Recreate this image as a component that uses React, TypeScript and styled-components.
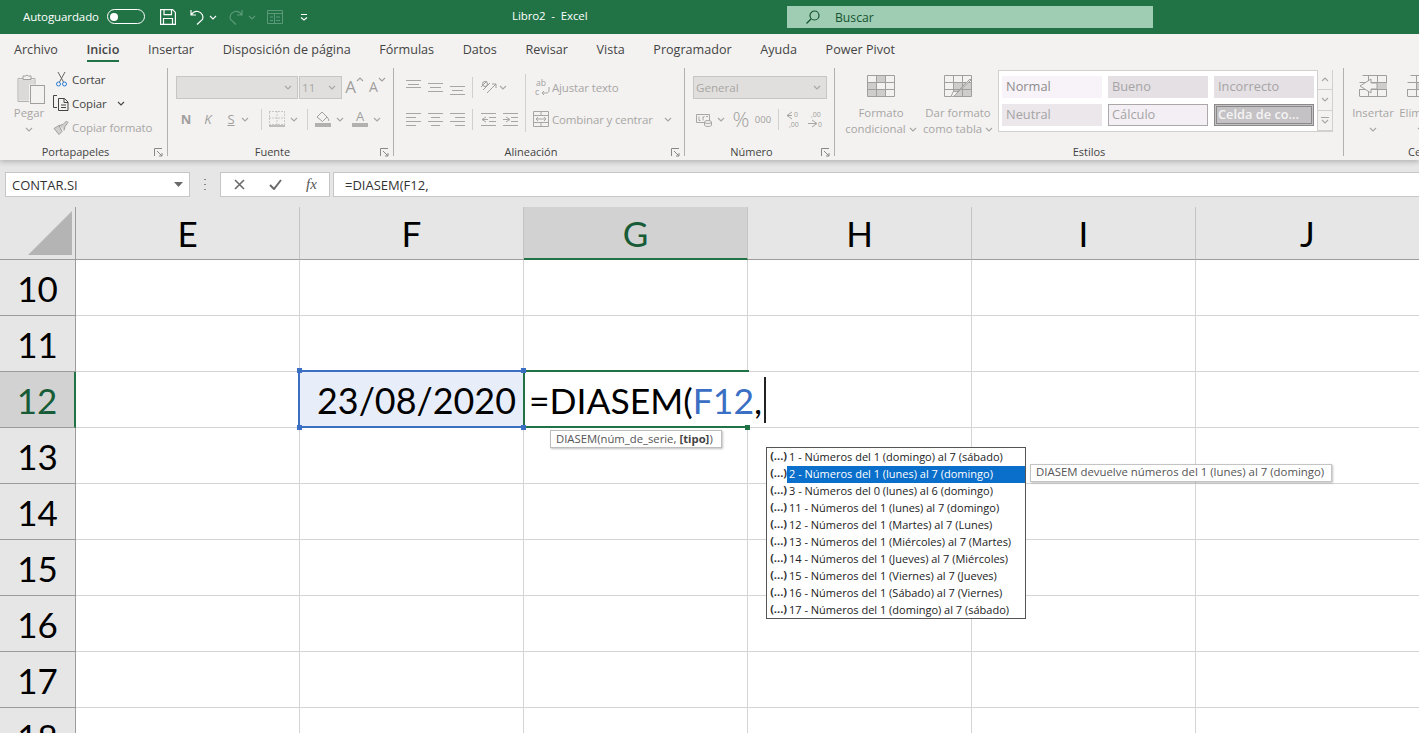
import React from "react";
import styled, { createGlobalStyle } from "styled-components";

const UI = `"Open Sans", "Noto Sans", sans-serif`;
const SHEET = `Lato, "Open Sans", sans-serif`;
const DIM = "#a8a6a4";
const LINE = "#b3b0ad";

const Global = createGlobalStyle`
  html, body { margin: 0; padding: 0; background: #fff; }
  body { font-family: ${UI}; overflow: hidden; }
  * { box-sizing: border-box; }
`;

const Page = styled.div`
  width: 1419px; height: 733px; overflow: hidden; display: flex; flex-direction: column; position: relative;
`;

/* ---------- title bar ---------- */
const TitleBar = styled.header`
  height: 34px; flex: none; background: #217346; color: #fff; display: flex; align-items: center; font-size: 11.5px;
`;
const AutoSave = styled.span`margin-left: 23px; margin-top: -1px; width: 77px; white-space: nowrap; letter-spacing: -0.1px;`;
const Toggle = styled.span`
  margin-left: 7px; width: 38px; height: 15px; margin-top: -1px; border: 1.5px solid #fff; border-radius: 8px; display: flex; align-items: center; padding-left: 2px;
  &::before { content: ""; width: 8px; height: 8px; border-radius: 50%; background: #fff; }
`;
const QuickIcon = styled.span<{ $w: number; $ml: number; $dim?: boolean }>`
  display: inline-flex; align-items: center; justify-content: center; width: ${p => p.$w}px; margin-left: ${p => p.$ml}px;
  color: ${p => (p.$dim ? "#5b9a78" : "#fff")};
`;
const DocTitle = styled.span`margin-left: ${512 - 308}px; margin-top: -3px; width: 275px; white-space: pre; letter-spacing: -0.1px;`;
const SearchBox = styled.div`
  width: 366px; height: 22px; background: #9fcdb3; color: #14532f; display: flex; align-items: center; padding-left: 19px; gap: 15px; font-size: 12.2px;
`;

/* ---------- tabs ---------- */
const TabBar = styled.nav`
  height: 30px; flex: none; background: #f3f2f1; display: flex; gap: 28.6px; padding-left: 14px;
`;
const Tab = styled.span<{ $active?: boolean }>`
  height: 30px; display: flex; align-items: center; font-size: 12.6px; color: #444; white-space: nowrap; position: relative;
  font-weight: ${p => (p.$active ? 600 : 400)};
  &::after { content: ""; position: absolute; left: 0; right: 0; bottom: 2px; height: 2px; background: ${p => (p.$active ? "#217346" : "transparent")}; }
`;

/* ---------- ribbon ---------- */
const Ribbon = styled.section`
  height: 96px; flex: none; background: #f3f2f1; display: flex; position: relative; z-index: 2; overflow: hidden;
  box-shadow: 0 2px 5px rgba(0,0,0,.22); clip-path: inset(0 0 -10px 0);
`;
const Group = styled.div<{ $w: number }>`
  width: ${p => p.$w}px; flex: none; height: 96px; display: flex; flex-direction: column; position: relative;
`;
const GroupDivider = styled.i`width: 1px; height: 88px; margin-top: 4px; background: ${LINE}; flex: none;`;
const GroupBody = styled.div`height: 80px; display: flex; flex: none;`;
const GroupLabel = styled.div<{ $launcher?: boolean }>`
  height: 16px; font-size: 11px; line-height: 16px; color: #444; text-align: center; padding-right: ${p => (p.$launcher ? 16 : 0)}px;
`;
const Launcher = styled.span`position: absolute; right: 4px; bottom: 3px; color: #8a8886; display: flex;`;
const BigButton = styled.div<{ $w: number; $ml?: number; $top?: number }>`
  width: ${p => p.$w}px; margin-left: ${p => p.$ml ?? 0}px; padding-top: ${p => p.$top ?? 11}px; flex: none;
  display: flex; flex-direction: column; align-items: center; color: ${DIM}; font-size: 11.4px; line-height: 16px; white-space: nowrap;
`;
const BigIcon = styled.span<{ $h: number; $shift?: number }>`height: ${p => p.$h}px; display: flex; margin-bottom: 1px; margin-left: ${p => p.$shift ?? 0}px;`;
const BigText = styled.span<{ $mt?: number }>`margin-top: ${p => p.$mt ?? 7}px; display: flex; align-items: center; gap: 3px;`;
const BigLine = styled.span`display: flex; align-items: center; gap: 3px; height: 16px;`;
const ChevLine = styled.span`height: 16px; display: flex; align-items: center;`;

const ClipColumn = styled.div`padding-top: 3px; margin-left: 3px; width: 114px;`;
const ClipRow = styled.div<{ $dim?: boolean }>`
  height: 24.3px; display: flex; align-items: center; font-size: 11.5px; white-space: nowrap; letter-spacing: -0.1px; color: ${p => (p.$dim ? DIM : "#444")};
`;
const ClipIcon = styled.span`width: 16px; display: flex; justify-content: center; flex: none; margin-right: 3px;`;
const ClipChev = styled.span`margin-left: 10px; display: flex; color: #444;`;

const ToolStack = styled.div<{ $w?: number }>`
  padding-top: 11px; display: flex; flex-direction: column; gap: 8px; flex: none; ${p => (p.$w ? `width: ${p.$w}px;` : "")}
`;
const ToolRow = styled.div`height: 24px; display: flex; align-items: center; color: ${DIM};`;
const Tool = styled.span<{ $w: number; $ml?: number }>`
  width: ${p => p.$w}px; margin-left: ${p => p.$ml ?? 0}px; flex: none; display: inline-flex; align-items: center; justify-content: center;
`;
const ToolSep = styled.i<{ $ml: number }>`width: 1px; height: 21px; flex: none; background: #d2d0ce; margin-left: ${p => p.$ml}px;`;
const TallSep = styled.i`width: 1px; height: 58px; margin-top: 10px; flex: none; background: #d2d0ce;`;
const ToolText = styled.span<{ $ml: number; $w?: number }>`
  margin-left: ${p => p.$ml}px; font-size: 11.5px; white-space: nowrap; color: ${DIM}; letter-spacing: -0.15px; ${p => (p.$w ? `width:${p.$w}px;` : "")}
`;
const Combo = styled.div<{ $w: number; $ml: number }>`
  width: ${p => p.$w}px; height: 23px; margin-left: ${p => p.$ml}px; flex: none; background: #e1dfdd; border: 1px solid #c8c6c4; color: ${DIM};
  display: flex; align-items: center; justify-content: space-between; padding: 0 5px 0 2px; font-size: 11.6px;
`;
const Bold = styled.span`font-weight: 700; font-size: 13px; color: #a19f9d;`;
const Ital = styled.span`font-style: italic; font-size: 13px; color: #a19f9d;`;
const Under = styled.span`text-decoration: underline; font-size: 13px; color: #a19f9d;`;
const GrowA = styled.span<{ $size: number }>`font-size: ${p => p.$size}px; line-height: 20px; color: #a19f9d; display: inline-flex; align-items: flex-start; gap: 0;`;
const ColorA = styled.span`
  width: 16px; height: 16px; display: flex; justify-content: center; align-items: flex-end; font-size: 13px; line-height: 13px; color: #a19f9d; border-bottom: 4px solid #b3b0ad;
`;
const Percent = styled.span`font-size: 21px; font-weight: 300; line-height: 20px; color: #a19f9d;`;
const Thousand = styled.span`font-size: 9.5px; color: #a19f9d;`;

const Gallery = styled.div`
  width: 335px; height: 62px; margin: 6px 0 0 1px; background: #fff; border: 1px solid #d2d0ce; display: flex; flex: none; padding: 5px 0 0 3px;
`;
const StyleGrid = styled.div`display: grid; grid-template-columns: repeat(3, 100px); grid-template-rows: 22px 22px; gap: 6px; width: 316px;`;
type Chip = "normal" | "bad" | "neutral" | "calc" | "check";
const StyleChip = styled.span<{ $kind: Chip }>`
  display: flex; align-items: center; font-size: 12.8px; white-space: nowrap; overflow: hidden; padding-bottom: 2px;
  padding-left: ${p => (p.$kind === "check" ? 1 : p.$kind === "calc" ? 3 : 4)}px;
  background: ${p => ({ normal: "#f7f3f8", bad: "#e4e0e4", neutral: "#ebe7eb", calc: "#f3eff4", check: "#c4c2c5" } as Record<Chip, string>)[p.$kind]};
  color: ${p => (p.$kind === "check" ? "#f4f4f4" : p.$kind === "normal" ? "#8e8c8c" : "#a6a4a5")};
  font-weight: ${p => (p.$kind === "check" ? 600 : 400)};
  border: ${p => (p.$kind === "calc" ? "1px solid #aaa8a8" : p.$kind === "check" ? "3px double #8a8888" : "none")};
`;
const GalleryScroll = styled.div`width: 15px; margin-top: -6px; height: 61px; display: flex; flex-direction: column; border-left: 1px solid #d2d0ce; background: #f3f2f1;`;
const ScrollBtn = styled.span`
  flex: 1; display: flex; align-items: center; justify-content: center; color: ${DIM}; border-bottom: 1px solid #d2d0ce;
`;

/* ---------- formula bar ---------- */
const FormulaArea = styled.div`
  height: 47px; flex: none; background: #e6e6e6; padding-top: 12px; display: flex; align-items: flex-start;
`;
const NameBox = styled.div`
  margin-left: 5px; width: 185px; height: 25px; background: #fff; border: 1px solid #c6c6c6; display: flex; align-items: center; justify-content: space-between;
  padding: 0 6px; font-size: 13px; color: #333;
`;
const Grip = styled.span`
  width: 2px; height: 14px; margin: 5px 14px 0 14px; background-image: radial-gradient(circle, #8a8886 1px, transparent 1px); background-size: 2px 5px;
`;
const FxBox = styled.div`
  width: 110px; height: 25px; background: #fff; border: 1px solid #c6c6c6; display: flex; align-items: center; padding-left: 13px; gap: 24px; color: #6a6a6a;
`;
const FxMark = styled.span`font-family: "Liberation Serif", serif; font-style: italic; font-weight: 400; font-size: 15px; color: #555; margin-left: 0;`;
const FormulaInput = styled.div`
  margin-left: 3px; flex: 1; height: 25px; background: #fff; border: 1px solid #c6c6c6; border-right: none; display: flex; align-items: center; padding-left: 11px;
  font-size: 13px; color: #333;
`;

/* ---------- sheet ---------- */
const Sheet = styled.div`
  flex: 1; position: relative; overflow: hidden; display: grid; grid-template-columns: 76px repeat(6, 224px); grid-auto-rows: 56px; grid-template-rows: 53px;
  font-family: ${SHEET}; background: #fff;
`;
const Corner = styled.div`
  background: #e6e6e6; border-right: 1px solid #9c9c9c; border-bottom: 1px solid #9c9c9c; position: relative;
  &::after {
    content: ""; position: absolute; right: 3px; bottom: 4px; width: 44px; height: 44px; background: #b4b4b4; clip-path: polygon(100% 0, 100% 100%, 0 100%);
  }
`;
const ColHead = styled.div<{ $active?: boolean }>`
  display: flex; align-items: center; justify-content: center; font-size: 35px; padding-top: 0;
  background: ${p => (p.$active ? "#d2d2d2" : "#e6e6e6")}; color: ${p => (p.$active ? "#185c37" : "#000")};
  border-right: 1px solid #c4c4c4; border-bottom: ${p => (p.$active ? "2px solid #217346" : "1px solid #9c9c9c")};
`;
const RowHead = styled.div<{ $active?: boolean }>`
  display: flex; align-items: center; justify-content: center; font-size: 35px;
  background: ${p => (p.$active ? "#d2d2d2" : "#e6e6e6")}; color: ${p => (p.$active ? "#185c37" : "#000")};
  border-right: ${p => (p.$active ? "2px solid #217346" : "1px solid #9c9c9c")}; border-bottom: 1px solid #9c9c9c;
`;
const Cell = styled.div`border-right: 1px solid #d4d4d4; border-bottom: 1px solid #d4d4d4; position: relative;`;
const RefCell = styled.div`
  position: relative; background: #e8eef9; display: flex; align-items: center; justify-content: flex-end; padding-right: 8px; font-size: 35.9px; color: #000; z-index: 3;
`;
const RefFrame = styled.span`position: absolute; left: -2px; top: -2px; right: -1px; bottom: 0; border: 2px solid #3a6fc4; border-right-color: #217346;`;
const Handle = styled.span<{ $x: "l" | "r"; $y: "t" | "b"; $c: string }>`
  position: absolute; width: 5px; height: 5px; background: ${p => p.$c};
  ${p => (p.$x === "l" ? "left: -3px;" : "right: -2px;")} ${p => (p.$y === "t" ? "top: -4px;" : "bottom: -2px;")}
`;
const EditCell = styled.div`
  position: relative; display: flex; align-items: center; padding-left: 5px; font-size: 35.5px; color: #000; white-space: nowrap; background: #fff; z-index: 2;
  &::before { content: ""; position: absolute; left: -1px; right: -1px; top: -2px; bottom: 0; border: 2px solid #217346; border-right: none; pointer-events: none; }
`;
const RefText = styled.span`color: #3a6fc4;`;
const Caret = styled.span`flex: none; display: block; width: 2px; height: 46px; background: #222; margin-left: 2px;`;

const ArgTip = styled.div`
  position: absolute; left: 550px; top: 223px; width: 172px; height: 18px; z-index: 5; background: #fff; border: 1px solid #bdbdbd; box-shadow: 1px 1px 2px rgba(0,0,0,.25);
  font-family: ${UI}; font-size: 11.3px; color: #555; display: flex; align-items: center; padding: 0 0 2px 5px; white-space: nowrap;
  b { color: #444; margin-left: 3px; }
`;
const Menu = styled.ul`
  position: absolute; left: 766px; top: 240px; width: 260px; height: 172px; z-index: 5; margin: 0; padding: 1px 0 0; list-style: none; background: #fff; border: 1px solid #555;
  font-family: ${UI}; font-size: 11px; color: #222;
`;
const MenuItem = styled.li`height: 17px; display: flex; align-items: center; white-space: nowrap;`;
const MenuMark = styled.span`width: 20px; flex: none; text-align: right; font-weight: 700; font-size: 11px; letter-spacing: 0; color: #333; margin-top: -5px;`;
const MenuText = styled.span<{ $on?: boolean }>`
  flex: 1; height: 17px; line-height: 15px; padding-left: 2px;
  background: ${p => (p.$on ? "#0a6ecb" : "transparent")}; color: ${p => (p.$on ? "#fff" : "#222")};
`;
const SideTip = styled.div`
  position: absolute; left: 1030px; top: 257px; width: 302px; height: 18px; z-index: 5; background: #fff; border: 1px solid #c4c4c4; box-shadow: 1px 1px 2px rgba(0,0,0,.25);
  font-family: ${UI}; font-size: 11.4px; color: #555; display: flex; align-items: center; padding: 0 0 3px 5px; white-space: nowrap;
`;

/* ---------- drawings ---------- */
const Svg: React.FC<{ w: number; h: number; children: React.ReactNode; sw?: number }> = ({ w, h, children, sw = 1 }) => (
  <svg width={w} height={h} viewBox={`0 0 ${w} ${h}`} fill="none" stroke="currentColor" strokeWidth={sw} style={{ display: "block" }}>
    {children}
  </svg>
);
const Chev = () => (
  <Svg w={8} h={5} sw={1.1}><path d="M1 1l3 3 3-3" /></Svg>
);
const Up = () => (
  <Svg w={8} h={5} sw={1.1}><path d="M1 4l3-3 3 3" /></Svg>
);
const Lines: React.FC<{ ys: number[]; xs: [number, number][] }> = ({ ys, xs }) => (
  <Svg w={15} h={17}>
    {ys.map((y, i) => <path key={i} d={`M${xs[i % xs.length][0]} ${y}H${xs[i % xs.length][1]}`} />)}
  </Svg>
);
const AW: [number, number] = [0, 15];
const GridPic: React.FC<{ fills: [number, number, number, number][]; brush?: boolean }> = ({ fills, brush }) => (
  <Svg w={28} h={22}>
    {fills.map((f, i) => <rect key={i} x={f[0]} y={f[1]} width={f[2]} height={f[3]} fill="#cfcdcb" stroke="none" />)}
    <path d="M.5.5h27v21H.5zM.5 7.5h27M.5 14.5h27M9.5.5v21M18.5.5v21" stroke="#a19f9d" />
    {brush && <path d="M27 5L14 17l-2 2c-1 2-3 3-6 3 2-1 2-3 3-5 1-1 3-1 4 0L26 4z" fill="#f3f2f1" stroke="#a19f9d" />}
  </Svg>
);
const CellsPic: React.FC<{ arrow?: boolean }> = ({ arrow }) => (
  <Svg w={28} h={22}>
    <path d="M3.5.5h24M.5 21.5h27M.5 14.5h27M.5 7.5h27M9.5.5v21M18.5.5v21M27.5.5v21M.5 14v7" stroke="#a19f9d" />
    <rect x={10} y={8} width={18} height={6} fill="#cfcdcb" stroke="none" />
    {arrow && <path d="M12 4L1 11l11 7v-4h6V8h-6z" fill="#f3f2f1" stroke="#a19f9d" />}
  </Svg>
);

const rows = [10, 11, 12, 13, 14, 15, 16, 17, 18];
const cols = ["E", "F", "G", "H", "I", "J"];
const items = [
  "1 - Números del 1 (domingo) al 7 (sábado)",
  "2 - Números del 1 (lunes) al 7 (domingo)",
  "3 - Números del 0 (lunes) al 6 (domingo)",
  "11 - Números del 1 (lunes) al 7 (domingo)",
  "12 - Números del 1 (Martes) al 7 (Lunes)",
  "13 - Números del 1 (Miércoles) al 7 (Martes)",
  "14 - Números del 1 (Jueves) al 7 (Miércoles)",
  "15 - Números del 1 (Viernes) al 7 (Jueves)",
  "16 - Números del 1 (Sábado) al 7 (Viernes)",
  "17 - Números del 1 (domingo) al 7 (sábado)",
];
const tabs = ["Archivo", "Inicio", "Insertar", "Disposición de página", "Fórmulas", "Datos", "Revisar", "Vista", "Programador", "Ayuda", "Power Pivot"];

const LauncherIcon = () => (
  <Launcher><Svg w={9} h={9}><path d="M.5 8V.5H8M3 3l5 5M8 5v3H5" /></Svg></Launcher>
);

export default function App() {
  return (
    <Page>
      <Global />
      <TitleBar>
        <AutoSave>Autoguardado</AutoSave>
        <Toggle />
        <QuickIcon $w={16} $ml={15}>
          <Svg w={16} h={16} sw={1.2}><path d="M.6.6h12l2.8 2.8v12H.6zM4 .6v5h7.500v-5M3.500 15.400V9.500h9v5.900" /></Svg>
        </QuickIcon>
        <QuickIcon $w={15} $ml={14}>
          <Svg w={15} h={16} sw={1.2}><path d="M1 1v5h5M1.200 6C3 3 5.500 2 8 2.500c4 1 6 5 4.500 8L7 15.500" /></Svg>
        </QuickIcon>
        <QuickIcon $w={8} $ml={4}><Chev /></QuickIcon>
        <QuickIcon $w={15} $ml={11} $dim>
          <Svg w={15} h={16} sw={1.2}><path d="M14 1v5H9M13.800 6C12 3 9.500 2 7 2.500c-4 1-6 5-4.500 8l5.500 5" /></Svg>
        </QuickIcon>
        <QuickIcon $w={8} $ml={5} $dim><Chev /></QuickIcon>
        <QuickIcon $w={16} $ml={11} $dim>
          <Svg w={16} h={14}><path d="M.5.500h15v13H.5zM.5 3.500h15M3 7h3M3 10.500h3M9 7h4M9 10.500h4M7.500 3.500v10" /></Svg>
        </QuickIcon>
        <QuickIcon $w={8} $ml={17}>
          <Svg w={8} h={8} sw={1.2}><path d="M1 1.500h6M1 4.500l3 2.500 3-2.500" /></Svg>
        </QuickIcon>
        <DocTitle>Libro2  -  Excel</DocTitle>
        <SearchBox>
          <Svg w={14} h={14} sw={1.2}><circle cx={8.500} cy={5.500} r={4.500} /><path d="M5 9l-4.500 4.500" /></Svg>
          Buscar
        </SearchBox>
      </TitleBar>

      <TabBar>
        {tabs.map(t => <Tab key={t} $active={t === "Inicio"}>{t}</Tab>)}
      </TabBar>

      <Ribbon>
        <Group $w={167}>
          <GroupBody>
            <BigButton $w={42} $ml={8} $top={8}>
              <BigIcon $h={32} $shift={4}>
                <Svg w={28} h={32}>
                  <path d="M1 6.500h6M13 6.500h5v6M1 6.500v23h11" stroke="#b3b0ad" />
                  <path d="M2 7.500h15v5h-5v16H2z" fill="#dcdad8" stroke="none" />
                  <path d="M6 7V4h2.500a2 2 0 013 0H14v3.500H6z" fill="#f3f2f1" stroke="#a19f9d" />
                  <rect x={13.500} y={13.500} width={14} height={18} fill="#f3f2f1" stroke="#a19f9d" />
                </Svg>
              </BigIcon>
              <BigLine>Pegar</BigLine>
              <ChevLine><Chev /></ChevLine>
            </BigButton>
            <ClipColumn>
              <ClipRow>
                <ClipIcon>
                  <Svg w={11} h={16}>
                    <path d="M2 1l5.500 10M9 1L3.500 11" stroke="#666" />
                    <circle cx={2.500} cy={13} r={2} stroke="#2b7cd3" /><circle cx={8.500} cy={13} r={2} stroke="#2b7cd3" />
                  </Svg>
                </ClipIcon>
                Cortar
              </ClipRow>
              <ClipRow>
                <ClipIcon>
                  <Svg w={16} h={16} sw={1}>
                    <path d="M4 .500H.500v12H4M5.500 3.500h6l3.500 3.500v8.500h-9.500zM11 3.500v4h4M8 10h5M8 12.500h5" stroke="#444" />
                  </Svg>
                </ClipIcon>
                Copiar
                <ClipChev><Chev /></ClipChev>
              </ClipRow>
              <ClipRow $dim>
                <ClipIcon>
                  <Svg w={16} h={16}>
                    <path d="M1 8.500l5 6 3-3-3-6zM6 5.500l4-1 3.500-3.500 1.500 1.500-3 4-1 4" fill="#d2d0ce" stroke="#a19f9d" />
                  </Svg>
                </ClipIcon>
                Copiar formato
              </ClipRow>
            </ClipColumn>
          </GroupBody>
          <GroupLabel $launcher>Portapapeles</GroupLabel>
          <LauncherIcon />
        </Group>
        <GroupDivider />

        <Group $w={225}>
          <GroupBody>
            <ToolStack>
              <ToolRow>
                <Combo $w={122} $ml={8}><span /><Chev /></Combo>
                <Combo $w={43} $ml={1}>11<Chev /></Combo>
                <Tool $w={17} $ml={4}><GrowA $size={17}>A<Up /></GrowA></Tool>
                <Tool $w={17} $ml={6}><GrowA $size={14}>A<Chev /></GrowA></Tool>
              </ToolRow>
              <ToolRow>
                <Tool $w={16} $ml={10}><Bold>N</Bold></Tool>
                <Tool $w={16} $ml={6}><Ital>K</Ital></Tool>
                <Tool $w={16} $ml={7}><Under>S</Under></Tool>
                <Tool $w={8} $ml={2}><Chev /></Tool>
                <ToolSep $ml={12} />
                <Tool $w={16} $ml={7}>
                  <Svg w={16} h={16}>
                    <path d="M.5.500h15v13H.5zM8 .500v13M.5 7h15" strokeDasharray="1 2" stroke="#a19f9d" />
                    <path d="M0 15h16" stroke="#8a8886" />
                  </Svg>
                </Tool>
                <Tool $w={8} $ml={5}><Chev /></Tool>
                <ToolSep $ml={9} />
                <Tool $w={16} $ml={7}>
                  <Svg w={16} h={16}>
                    <path d="M2 6l5-5 5 5-4.500 4.500z" stroke="#a19f9d" /><path d="M12 6c1.500 1.500 2 3 1.500 4" stroke="#a19f9d" />
                    <rect x={0} y={12} width={16} height={4} fill="#b3b0ad" stroke="none" />
                  </Svg>
                </Tool>
                <Tool $w={8} $ml={5}><Chev /></Tool>
                <Tool $w={16} $ml={8}><ColorA>A</ColorA></Tool>
                <Tool $w={8} $ml={5}><Chev /></Tool>
              </ToolRow>
            </ToolStack>
          </GroupBody>
          <GroupLabel $launcher>Fuente</GroupLabel>
          <LauncherIcon />
        </Group>
        <GroupDivider />

        <Group $w={290}>
          <GroupBody>
            <ToolStack $w={131}>
              <ToolRow>
                <Tool $w={15} $ml={12}><Lines ys={[1.5, 5.5, 8.5]} xs={[AW, [2, 13], AW]} /></Tool>
                <Tool $w={15} $ml={7}><Lines ys={[4.5, 8.5, 12.5]} xs={[AW, [2, 13], AW]} /></Tool>
                <Tool $w={15} $ml={7}><Lines ys={[7.5, 11.5, 15.5]} xs={[AW, [2, 13], AW]} /></Tool>
                <ToolSep $ml={7} />
                <Tool $w={18} $ml={7}>
                  <Svg w={18} h={16}>
                    <path d="M1 8l6-6M3 11l7-7M7 14L16 5M16 5h-4M16 5v4" stroke="#a19f9d" />
                    <circle cx={5} cy={5} r={2.500} stroke="#a19f9d" />
                  </Svg>
                </Tool>
                <Tool $w={8} $ml={1}><Chev /></Tool>
              </ToolRow>
              <ToolRow>
                <Tool $w={15} $ml={12}><Lines ys={[2.5, 6.5, 10.5, 14.5]} xs={[AW, [0, 10]]} /></Tool>
                <Tool $w={15} $ml={7}><Lines ys={[2.5, 6.5, 10.5, 14.5]} xs={[AW, [3, 12]]} /></Tool>
                <Tool $w={15} $ml={7}><Lines ys={[2.5, 6.5, 10.5, 14.5]} xs={[AW, [5, 15]]} /></Tool>
                <ToolSep $ml={7} />
                <Tool $w={15} $ml={8}>
                  <Svg w={15} h={17}><path d="M0 2.500h15M8 6.500h7M8 10.500h7M0 14.500h15M5 6L1 8.500 5 11M1 8.500h6" /></Svg>
                </Tool>
                <Tool $w={15} $ml={7}>
                  <Svg w={15} h={17}><path d="M0 2.500h15M8 6.500h7M8 10.500h7M0 14.500h15M3 6l4 2.500L3 11M0 8.500h6" /></Svg>
                </Tool>
              </ToolRow>
            </ToolStack>
            <TallSep />
            <ToolStack>
              <ToolRow>
                <Tool $w={15} $ml={9}>
                  <Svg w={15} h={20}>
                    <text x={1} y={9} fontSize={8.500} fill="#a19f9d" stroke="none" fontFamily="Open Sans">ab</text>
                    <text x={0} y={18} fontSize={8.500} fill="#a19f9d" stroke="none" fontFamily="Open Sans">c</text>
                    <path d="M14 10v3c0 2-1 3-3 3H7M9 14l-2 2 2 2" />
                  </Svg>
                </Tool>
                <ToolText $ml={2}>Ajustar texto</ToolText>
              </ToolRow>
              <ToolRow>
                <Tool $w={16} $ml={7}>
                  <Svg w={16} h={16}><path d="M.5.500h15v15H.5zM.5 4.500h15M.5 11.500h15M8 .500v4M8 11.500v4M3 8h10M5 6L3 8l2 2M11 6l2 2-2 2" /></Svg>
                </Tool>
                <ToolText $ml={3} $w={103}>Combinar y centrar</ToolText>
                <Tool $w={8} $ml={9}><Chev /></Tool>
              </ToolRow>
            </ToolStack>
          </GroupBody>
          <GroupLabel $launcher>Alineación</GroupLabel>
          <LauncherIcon />
        </Group>
        <GroupDivider />

        <Group $w={149}>
          <GroupBody>
            <ToolStack>
              <ToolRow><Combo $w={134} $ml={8}>General<Chev /></Combo></ToolRow>
              <ToolRow>
                <Tool $w={16} $ml={11}>
                  <Svg w={16} h={16}><path d="M.5 3.500h13v8H.5zM3 5.500v4h1.500M7 5.500v4M7 6.500l1.500-1M10 5.500h2" /><ellipse cx={12} cy={11} rx={3.500} ry={1.500} fill="#f3f2f1" /><path d="M8.500 11v3c0 2 7 2 7 0v-3" /></Svg>
                </Tool>
                <Tool $w={8} $ml={5}><Chev /></Tool>
                <Tool $w={16} $ml={8}><Percent>%</Percent></Tool>
                <Tool $w={16} $ml={6}><Thousand>000</Thousand></Tool>
                <ToolSep $ml={7} />
                <Tool $w={15} $ml={7}>
                  <Svg w={15} h={18}>
                    <path d="M6 2L1 5.500 6 9M1 5.500h5" />
                    <text x={8} y={7} fontSize={7} fill="#a19f9d" stroke="none" fontFamily="Open Sans">0</text>
                    <text x={3} y={17} fontSize={7} fill="#a19f9d" stroke="none" fontFamily="Open Sans">,00</text>
                  </Svg>
                </Tool>
                <Tool $w={15} $ml={7}>
                  <Svg w={15} h={18}>
                    <text x={3} y={7} fontSize={7} fill="#a19f9d" stroke="none" fontFamily="Open Sans">,00</text>
                    <path d="M4 10l5 3.500L4 17M0 13.500h8" />
                    <text x={10} y={17} fontSize={7} fill="#a19f9d" stroke="none" fontFamily="Open Sans">0</text>
                  </Svg>
                </Tool>
              </ToolRow>
            </ToolStack>
          </GroupBody>
          <GroupLabel $launcher>Número</GroupLabel>
          <LauncherIcon />
        </Group>
        <GroupDivider />

        <Group $w={508}>
          <GroupBody>
            <BigButton $w={76} $ml={8}>
              <BigIcon $h={22}><GridPic fills={[[10, 1, 8, 6], [1, 8, 8, 6], [1, 15, 17, 6]]} /></BigIcon>
              <BigText>Formato</BigText>
              <BigLine>condicional <Chev /></BigLine>
            </BigButton>
            <BigButton $w={78}>
              <BigIcon $h={22}><GridPic fills={[[10, 8, 17, 13]]} brush /></BigIcon>
              <BigText>Dar formato</BigText>
              <BigLine>como tabla <Chev /></BigLine>
            </BigButton>
            <Gallery>
              <StyleGrid>
                <StyleChip $kind="normal">Normal</StyleChip>
                <StyleChip $kind="bad">Bueno</StyleChip>
                <StyleChip $kind="bad">Incorrecto</StyleChip>
                <StyleChip $kind="neutral">Neutral</StyleChip>
                <StyleChip $kind="calc">Cálculo</StyleChip>
                <StyleChip $kind="check">Celda de co...</StyleChip>
              </StyleGrid>
              <GalleryScroll>
                <ScrollBtn><Up /></ScrollBtn>
                <ScrollBtn><Chev /></ScrollBtn>
                <ScrollBtn>
                  <Svg w={8} h={8} sw={1.1}><path d="M0 1.500h8M1 4l3 3 3-3" /></Svg>
                </ScrollBtn>
              </GalleryScroll>
            </Gallery>
          </GroupBody>
          <GroupLabel>Estilos</GroupLabel>
        </Group>
        <GroupDivider />

        <Group $w={162}>
          <GroupBody>
            <BigButton $w={50} $ml={4}>
              <BigIcon $h={22}><CellsPic arrow /></BigIcon>
              <BigText>Insertar</BigText>
              <ChevLine><Chev /></ChevLine>
            </BigButton>
            <BigButton $w={46}>
              <BigIcon $h={22}><CellsPic /></BigIcon>
              <BigText>Eliminar</BigText>
              <ChevLine><Chev /></ChevLine>
            </BigButton>
          </GroupBody>
          <GroupLabel>Celdas</GroupLabel>
        </Group>
      </Ribbon>

      <FormulaArea>
        <NameBox>CONTAR.SI<Svg w={9} h={5}><path d="M0 0h9L4.500 5z" fill="#6a6a6a" stroke="none" /></Svg></NameBox>
        <Grip />
        <FxBox>
          <Svg w={11} h={11} sw={1.6}><path d="M1 1l9 9M10 1l-9 9" /></Svg>
          <Svg w={13} h={11} sw={2}><path d="M1 6l4 4 7-9" /></Svg>
          <FxMark>fx</FxMark>
        </FxBox>
        <FormulaInput>=DIASEM(F12,</FormulaInput>
      </FormulaArea>

      <Sheet>
        <Corner />
        {cols.map(c => <ColHead key={c} $active={c === "G"}>{c}</ColHead>)}
        {rows.map(r => (
          <React.Fragment key={r}>
            <RowHead $active={r === 12}>{r}</RowHead>
            {cols.map(c => {
              if (r === 12 && c === "F") {
                return (
                  <RefCell key={c}>
                    23/08/2020
                    <RefFrame />
                    <Handle $x="l" $y="t" $c="#3a6fc4" />
                    <Handle $x="r" $y="t" $c="#3a6fc4" />
                    <Handle $x="l" $y="b" $c="#3a6fc4" />
                    <Handle $x="r" $y="b" $c="#3a6fc4" />
                  </RefCell>
                );
              }
              if (r === 12 && c === "G") {
                return (
                  <EditCell key={c}>
                    =DIASEM(<RefText>F12</RefText>,<Caret />
                    <Handle $x="r" $y="b" $c="#217346" />
                  </EditCell>
                );
              }
              return <Cell key={c} />;
            })}
          </React.Fragment>
        ))}
        <ArgTip>DIASEM(núm_de_serie, <b>[tipo]</b>)</ArgTip>
        <Menu>
          {items.map((t, i) => (
            <MenuItem key={t}>
              <MenuMark>(...)</MenuMark>
              <MenuText $on={i === 1}>{t}</MenuText>
            </MenuItem>
          ))}
        </Menu>
        <SideTip>DIASEM devuelve números del 1 (lunes) al 7 (domingo)</SideTip>
      </Sheet>
    </Page>
  );
}
